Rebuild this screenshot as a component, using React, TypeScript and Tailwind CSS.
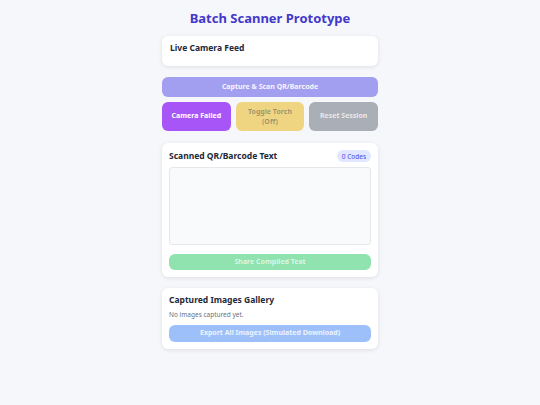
export default function App() {
  return (
    <div
      className="min-h-screen bg-[#f5f7fb] pt-[8px] pb-8"
      style={{ fontFamily: '"Noto Sans", "Open Sans", sans-serif' }}
    >
      <div className="mx-auto w-[216px]">
        <h1 className="text-center text-[13px] leading-[20px] font-bold text-[#4338ca]">
          Batch Scanner Prototype
        </h1>

        <div className="mt-[8px] h-[30px] rounded-md bg-white px-[8px] pt-[5px] shadow-[0_1px_4px_rgba(0,0,0,0.1)]">
          <h2 className="text-[8.5px] leading-[13px] font-bold text-gray-800">Live Camera Feed</h2>
        </div>

        <button className="mt-[11px] flex h-[20px] w-full items-center justify-center rounded-md bg-[#4f46e5]/50 text-[7px] font-bold text-white/90">
          Capture &amp; Scan QR/Barcode
        </button>

        <div className="mt-[5px] grid grid-cols-3 gap-[5px]">
          <button className="flex h-[29px] items-center justify-center rounded-md bg-[#a855f7] text-[7px] font-bold text-white">
            Camera Failed
          </button>
          <button className="flex h-[29px] flex-col items-center justify-center rounded-md bg-[#eab308]/50 text-[7px] leading-[10px] font-bold text-gray-700/45">
            <span>Toggle Torch</span>
            <span>(Off)</span>
          </button>
          <button className="flex h-[29px] items-center justify-center rounded-md bg-[#6b7280]/55 text-[7px] font-bold text-white/75">
            Reset Session
          </button>
        </div>

        <div className="mt-[12px] rounded-md bg-white p-[7px] shadow-[0_1px_4px_rgba(0,0,0,0.1)]">
          <div className="flex h-[12px] items-center justify-between">
            <h2 className="text-[8.5px] font-bold text-gray-800">Scanned QR/Barcode Text</h2>
            <span className="rounded-full bg-[#e0e7ff] px-[5px] py-[1.5px] text-[6.5px] leading-[9px] text-[#4f46e5]">0 Codes</span>
          </div>
          <textarea
            readOnly
            className="mt-[5px] block h-[78px] w-full resize-none rounded-[3px] border border-gray-200 bg-[#f9fafb]"
          />
          <button className="mt-[9px] flex h-[16px] w-full items-center justify-center rounded-md bg-[#22c55e]/50 text-[7px] font-bold text-white/70">
            Share Compiled Text
          </button>
        </div>

        <div className="mt-[11px] rounded-md bg-white px-[7px] pt-[5px] pb-[7px] shadow-[0_1px_4px_rgba(0,0,0,0.1)]">
          <h2 className="text-[8.5px] leading-[14px] font-bold text-gray-800">Captured Images Gallery</h2>
          <p className="mt-[3px] text-[6.5px] leading-[9px] text-gray-500">No images captured yet.</p>
          <button className="mt-[6px] flex h-[17px] w-full items-center justify-center rounded-md bg-[#3b82f6]/50 text-[7px] font-bold text-white/80">
            Export All Images (Simulated Download)
          </button>
        </div>
      </div>
    </div>
  );
}
